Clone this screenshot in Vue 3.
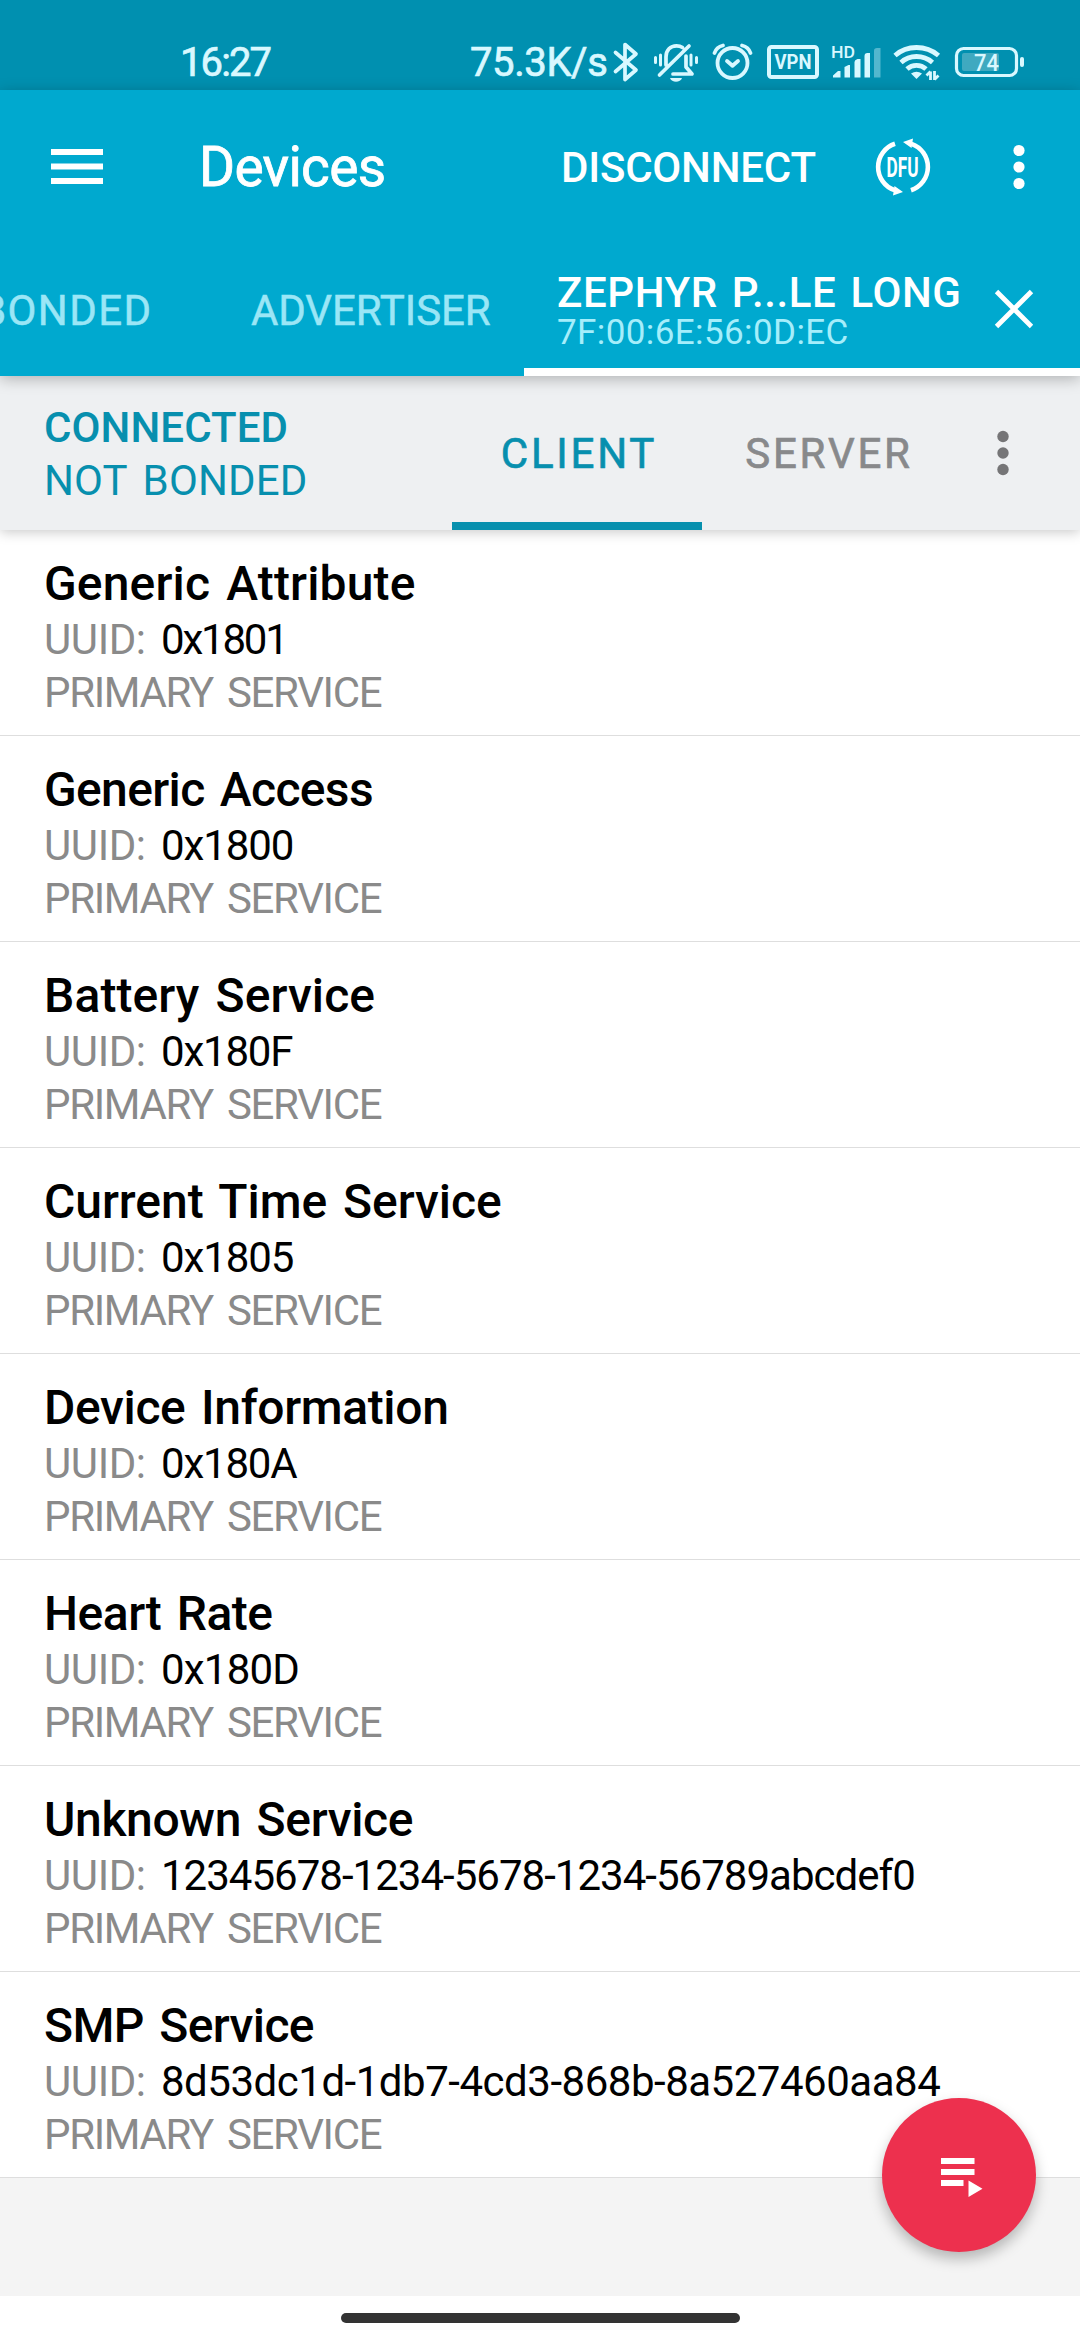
<script setup>
// `name` and `uuid` carry their own tracking in px (nt, ut)
const services = [
  { name: 'Generic Attribute', nt: 0.15, uuid: '0x1801', ut: -2.2 },
  { name: 'Generic Access', nt: -0.65, uuid: '0x1800', ut: -1.1 },
  { name: 'Battery Service', nt: 0.1, uuid: '0x180F', ut: -1.2 },
  { name: 'Current Time Service', nt: -0.05, uuid: '0x1805', ut: -1.1 },
  { name: 'Device Information', nt: -0.35, uuid: '0x180A', ut: -1.2 },
  { name: 'Heart Rate', nt: -0.5, uuid: '0x180D', ut: -0.8 },
  { name: 'Unknown Service', nt: -0.35, uuid: '12345678-1234-5678-1234-56789abcdef0', ut: -0.98 },
  { name: 'SMP Service', nt: -0.6, uuid: '8d53dc1d-1db7-4cd3-868b-8a527460aa84', ut: -0.48 },
]
</script>

<template>
  <div class="screen">
    <div class="status">
      <span class="clock">16:27</span>
      <span class="speed">75.3K/s</span>
      <div class="status-icons">
        <svg width="36" height="50" viewBox="610 37 36 50" fill="none" stroke="#d9f8ff" stroke-width="3.7" stroke-linejoin="round" stroke-linecap="round">
          <path d="M615.5 52.5 636 70 625 79.500V44.500L636 54 615.500 71.500" />
        </svg>
        <svg width="60" height="50" viewBox="646 37 60 50" fill="none" stroke="#d9f8ff" stroke-width="3.700" stroke-linecap="round" stroke-linejoin="round">
          <path d="M655.500 57.500V62.500M660.500 55V65M691 55V65M696.500 57.500V62.500" stroke-width="3" />
          <path d="M666 65V57C666 50 670.500 45.800 676.500 45.800c2.300 0 4.400.6 6 1.700M686 56v11l6 7H673M659.500 75 689 46" />
          <path d="M670 78h12c-1.500 5-10.500 5-12 0z" fill="#d9f8ff" stroke="none" />
        </svg>
        <svg width="56" height="50" viewBox="706 37 56 50" fill="none" stroke="#d9f8ff" stroke-width="3.800" stroke-linecap="round" stroke-linejoin="round">
          <circle cx="732.500" cy="63" r="15" />
          <path d="M714.500 53Q716.500 47 723 45.500M742 45.500Q748.500 47 750.500 53M727 61l5.500 4.800 5.500-4.800" />
        </svg>
        <svg width="64" height="50" viewBox="762 37 64 50">
          <rect x="769" y="47" width="48" height="30" rx="2.500" fill="none" stroke="#d9f8ff" stroke-width="4" />
          <text x="774.500" y="68.800" textLength="37" lengthAdjust="spacingAndGlyphs" class="glyph-text" font-size="19.500" font-weight="700">VPN</text>
        </svg>
        <svg width="62" height="50" viewBox="826 37 62 50" fill="#d9f8ff">
          <text x="831" y="57.500" textLength="24" lengthAdjust="spacingAndGlyphs" class="glyph-text" font-size="16" font-weight="500">HD</text>
          <path d="M833 77.500v-2l5-4.500h2.500v6.500zM844.500 77.500V67l4-2h1.500v12.500zM854.500 77.500V62q0-2 3-3h3v18.500zM864.500 77.500V56q0-3 3-3h2.500v24.500z" />
          <path d="M874 77.500V50.500q0-2.500 3-2.500h3.500v29.500z" opacity=".38" />
        </svg>
        <svg width="60" height="50" viewBox="888 37 60 50" fill="none" stroke="#d9f8ff" stroke-width="4.800">
          <path d="M895 55.500Q904 47.500 916.500 47.500T938.500 55.500M901 62.500Q907.500 56.500 916.500 56.500T932.500 62.500M907 69Q911 65.300 916.500 65.300T926 69" />
          <path d="M911 73.500q5.500-3.500 11 0l-5.500 5.500z" fill="#d9f8ff" stroke="none" />
          <path d="M930.500 80V71.500M926.500 75.500l4-4M934.500 71v9M934.500 79.500l4-4" stroke-width="2.800" />
        </svg>
        <svg width="82" height="50" viewBox="948 37 82 50">
          <rect x="962" y="53" width="37" height="18" rx="2" fill="#3fa9c0" />
          <rect x="956.500" y="48.500" width="60" height="27" rx="7" fill="none" stroke="#d9f8ff" stroke-width="3.200" />
          <rect x="1020" y="57" width="4" height="10" rx="2" fill="#d9f8ff" />
          <text x="974" y="71" textLength="25" lengthAdjust="spacingAndGlyphs" class="glyph-text" font-size="24" font-weight="500">74</text>
        </svg>
      </div>
    </div>

    <header class="appbar">
      <div class="toolbar">
        <svg class="menu" width="52" height="36" viewBox="0 0 52 36" fill="#fff">
          <path d="M0 0h52v6H0zM0 14.500h52v6H0zM0 29h52v6H0z" />
        </svg>
        <h1 class="heading">Devices</h1>
        <span class="disconnect">DISCONNECT</span>
        <svg class="dfu" width="60" height="60" viewBox="-30 -30 60 60">
          <g fill="none" stroke="#fff" stroke-width="4.600">
            <path d="M-8 -23.200A24.500 24.500 0 0 0 -8.500 23.200" />
            <path d="M8 23.200A24.500 24.500 0 0 0 8.500 -23.200" />
          </g>
          <path d="M0 -25 10 -28.500 8.500 -19zM0 25 -10 28.500 -8.500 19z" fill="#fff" />
          <text x="-16.500" y="9.500" textLength="32" lengthAdjust="spacingAndGlyphs" class="dfu-text" font-size="27" font-weight="700">DFU</text>
        </svg>
        <svg class="more" width="12" height="46" viewBox="0 0 12 46" fill="#fff">
          <circle cx="6" cy="6.500" r="5.600" /><circle cx="6" cy="23" r="5.600" /><circle cx="6" cy="39.500" r="5.600" />
        </svg>
      </div>
      <nav class="tabs">
        <span class="tab tab-bonded">BONDED</span>
        <span class="tab tab-adv">ADVERTISER</span>
        <div class="tab-device">
          <div class="device">
            <span class="device-name">ZEPHYR P...LE LONG</span>
            <span class="device-mac">7F:00:6E:56:0D:EC</span>
          </div>
          <svg class="close" width="40" height="40" viewBox="-20 -20 40 40" stroke="#fff" stroke-width="4.800">
            <path d="M-17.500 -17.500 17.500 17.500M17.500 -17.500 -17.500 17.500" />
          </svg>
        </div>
      </nav>
    </header>

    <section class="subbar">
      <div class="state">
        <span class="connected">CONNECTED</span>
        <span class="bond">NOT BONDED</span>
      </div>
      <span class="mode mode-client">CLIENT</span>
      <span class="mode mode-server">SERVER</span>
      <svg class="sub-more" width="12" height="46" viewBox="0 0 12 46" fill="#757577">
        <circle cx="6" cy="6.500" r="5.700" /><circle cx="6" cy="23" r="5.700" /><circle cx="6" cy="39.500" r="5.700" />
      </svg>
    </section>

    <main class="list">
      <article v-for="s in services" :key="s.name" class="service">
        <h2 class="name" :style="{ letterSpacing: s.nt + 'px' }">{{ s.name }}</h2>
        <p class="uuid"><span class="label">UUID:</span><span class="value" :style="{ letterSpacing: s.ut + 'px' }">{{ s.uuid }}</span></p>
        <p class="kind">PRIMARY SERVICE</p>
      </article>
    </main>

    <footer class="gesture"><div class="pill"></div></footer>

    <button class="fab" aria-label="Run macro">
      <svg width="44" height="42" viewBox="0 0 44 42" fill="#fff">
        <path d="M0 0h33.500v6H0zM0 11h33.500v6H0zM0 22h22.500v6H0zM27.500 22.500 41.500 30.800 27.500 39z" />
      </svg>
    </button>
  </div>
</template>

<style>
body {
  background: #fff;
}
</style>

<style scoped>
.screen {
  position: relative;
  display: flex;
  flex-direction: column;
  width: 1080px;
  height: 2340px;
  overflow: hidden;
  background: #f4f4f4;
  font-family: Roboto, "Liberation Sans", sans-serif;
  font-size: 42px;
  white-space: nowrap;
}
h1, h2, p {
  margin: 0;
}
.status {
  box-sizing: border-box;
  display: flex;
  flex: none;
  height: 90px;
  padding: 37px 0 0 180px;
  background: #0090b0;
  color: #d9f8ff;
  font-size: 40px;
  line-height: 51px;
}
.clock {
  width: 290px;
  letter-spacing: -1.9px;
  -webkit-text-stroke: .7px currentColor;
}
.speed {
  width: 140px;
  letter-spacing: -.4px;
  -webkit-text-stroke: .7px currentColor;
}
.status-icons {
  display: flex;
}
.status-icons svg {
  flex: none;
}
.glyph-text {
  fill: #d9f8ff;
  font-family: Roboto, sans-serif;
}
.appbar {
  flex: none;
  height: 286px;
  background: #00a9cf;
  color: #fff;
  position: relative;
  z-index: 2;
  box-shadow: 0 3px 14px rgba(0, 0, 0, .26);
}
.toolbar {
  display: flex;
  align-items: center;
  height: 154px;
}
.menu {
  margin-left: 51px;
}
.heading {
  width: 362px;
  margin-left: 96px;
  font-size: 55px;
  font-weight: 400;
  letter-spacing: -.7px;
  line-height: 60px;
  -webkit-text-stroke: .8px currentColor;
}
.disconnect {
  width: 311px;
  font-weight: 500;
  letter-spacing: -.2px;
}
.dfu {
  margin: 0 80px 0 1px;
  flex: none;
  overflow: visible;
}
.dfu-text {
  fill: #fff;
  font-family: Roboto, sans-serif;
}
.more {
  flex: none;
}
.tabs {
  display: flex;
  height: 132px;
}
.tab {
  padding-top: 42px;
  line-height: 50px;
  color: #9be6f6;
  -webkit-text-stroke: .5px currentColor;
}
.tab-bonded {
  width: 251px;
  text-indent: -20px;
  letter-spacing: 1.4px;
}
.tab-adv {
  width: 273px;
  letter-spacing: -.1px;
}
.tab-device {
  box-sizing: border-box;
  display: flex;
  align-items: center;
  width: 556px;
  padding-left: 33px;
  border-bottom: 8px solid #fff;
}
.device {
  display: flex;
  flex-direction: column;
  width: 437px;
  padding-top: 8px;
}
.device-name {
  font-weight: 500;
  line-height: 46px;
  letter-spacing: .6px;
  word-spacing: 3px;
}
.device-mac {
  color: #a5eefb;
  font-size: 35px;
  line-height: 34px;
  letter-spacing: .4px;
}
.close {
  margin-top: 5px;
}
.subbar {
  display: flex;
  flex: none;
  align-items: center;
  position: relative;
  z-index: 1;
  height: 154px;
  background: #eef0f2;
  color: #078fae;
  box-shadow: 0 2px 12px rgba(0, 0, 0, .22);
}
.state {
  display: flex;
  flex-direction: column;
  width: 408px;
  padding: 2px 0 0 44px;
  line-height: 53px;
}
.connected {
  font-weight: 500;
  letter-spacing: .1px;
}
.bond {
  letter-spacing: .15px;
  word-spacing: 5px;
}
.mode {
  box-sizing: border-box;
  width: 250px;
  height: 154px;
  padding: 3px 0 0 4px;
  border-bottom: 8px solid transparent;
  line-height: 150px;
  text-align: center;
  letter-spacing: 2.8px;
  -webkit-text-stroke: .7px currentColor;
}
.mode-client {
  border-color: #0790ae;
}
.mode-server {
  color: #88898b;
}
.sub-more {
  margin-left: 45px;
}
.list {
  flex: none;
  background: #fff;
}
.service {
  box-sizing: border-box;
  height: 206px;
  padding: 25px 0 0 44px;
  border-bottom: 1px solid #dedede;
}
.name {
  color: #000;
  font-size: 48px;
  font-weight: 500;
  line-height: 57px;
  word-spacing: 4px;
}
.uuid {
  display: flex;
  line-height: 55px;
}
.label {
  width: 117px;
  color: #8a8a8a;
  letter-spacing: -.4px;
}
.value {
  color: #000;
}
.kind {
  color: #8a8a8a;
  line-height: 52px;
  letter-spacing: -1.35px;
  word-spacing: 5px;
}
.gesture {
  display: flex;
  justify-content: center;
  height: 44px;
  margin-top: auto;
  background: #fff;
}
.pill {
  width: 399px;
  height: 10px;
  margin-top: 17px;
  border-radius: 5px;
  background: #333;
}
.fab {
  position: absolute;
  z-index: 3;
  left: 882px;
  top: 2098px;
  display: flex;
  width: 154px;
  height: 154px;
  padding: 60px 0 0 59px;
  border: 0;
  border-radius: 50%;
  background: #ed304e;
  box-shadow: 0 7px 14px rgba(0, 0, 0, .26);
  box-sizing: border-box;
}
</style>
